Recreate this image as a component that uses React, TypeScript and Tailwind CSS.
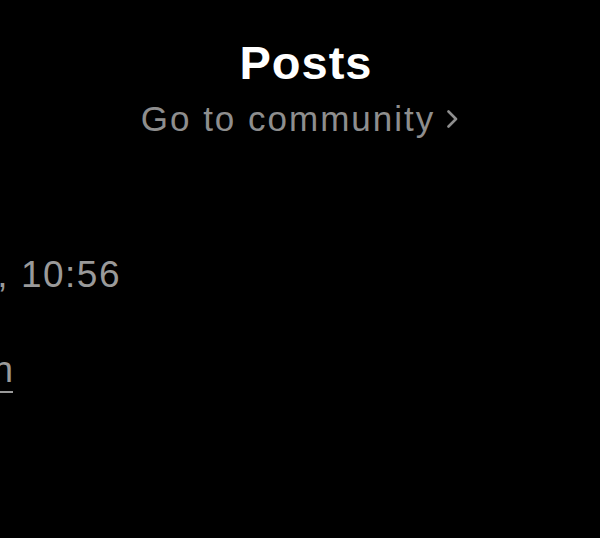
import React from 'react';

const Chevron: React.FC = () => (
  <svg width="13" height="18" viewBox="0 0 13 18" fill="none" className="shrink-0">
    <path d="M2.5 1.5L10 9L2.5 16.5" stroke="#8e8e8e" strokeWidth="2.6" strokeLinecap="round" strokeLinejoin="round" />
  </svg>
);

const App: React.FC = () => {
  return (
    <div className="w-[600px] h-[538px] bg-black overflow-hidden font-['Liberation_Sans',Arial,sans-serif]">
      <div className="flex flex-col items-center pt-[37px]">
        <h1 className="ml-[12px] text-[47px] leading-[52px] font-bold text-white tracking-[1px]">Posts</h1>
        <button className="mt-[9px] flex items-center gap-[11px] text-[35px] leading-[42px] text-[#8e8e8e] tracking-[2px]">
          <span>Go to community</span>
          <Chevron />
        </button>
      </div>

      {/* post meta, scrolled partly off the left edge */}
      <div className="mt-[113px] w-[121px] flex justify-end">
        <span className="whitespace-nowrap text-[37px] leading-[44px] text-[#9a9a9a] tracking-[1.5px]">Today, 10:56</span>
      </div>
      <div className="mt-[51px] w-[13px] flex justify-end">
        <a className="whitespace-nowrap text-[37px] leading-[44px] text-[#9a9a9a] underline decoration-2 underline-offset-[9px]">Learn</a>
      </div>
    </div>
  );
};

export default App;
